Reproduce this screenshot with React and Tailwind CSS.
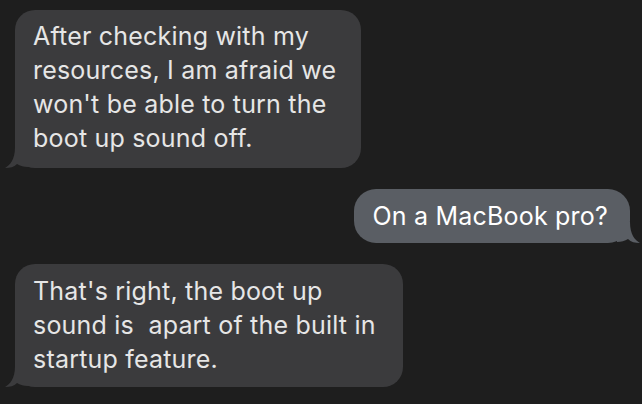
import React from "react";

function LeftTail() {
  return (
    <svg className="absolute left-[-11px] bottom-[-1px]" width="24" height="22" viewBox="0 0 24 22">
      <path d="M11 0 L24 0 L24 20 C20 20 16 19 13 17 C10 20 6 21 1 21 C6 18 11 13 11 0 Z" fill="#3b3b3d" />
    </svg>
  );
}

function RightTail({ color }) {
  return (
    <svg className="absolute right-[-11px] bottom-[-1px]" width="24" height="22" viewBox="0 0 24 22">
      <path d="M13 0 L0 0 L0 20 C4 20 8 19 11 17 C14 20 18 21 23 21 C18 18 13 13 13 0 Z" fill={color} />
    </svg>
  );
}

export default function App() {
  return (
    <div
      className="w-[642px] h-[404px] bg-[#1e1e1e] overflow-hidden flex flex-col gap-[21px] pt-[10px] pl-[15px] pr-[12px] text-[25px] leading-[34px] tracking-[0.2px]"
      style={{ fontFamily: "Inter, 'Noto Sans', sans-serif" }}
    >
      <div className="relative self-start w-[346px] h-[158px] rounded-[20px] bg-[#3b3b3d] px-[18px] pt-[9px] text-[#e6e6e6] whitespace-nowrap">
        After checking with my<br />
        resources, I am afraid we<br />
        won't be able to turn the<br />
        boot up sound off.
        <LeftTail />
      </div>

      <div className="relative self-end h-[54px] rounded-[22px] bg-[#5a5e64] pl-[19px] pr-[22px] pt-[10px] text-white whitespace-nowrap">
        On a MacBook pro?
        <RightTail color="#5a5e64" />
      </div>

      <div className="relative self-start w-[388px] h-[123px] rounded-[20px] bg-[#3b3b3d] px-[18px] pt-[10px] text-[#e6e6e6] whitespace-pre">
        That's right, the boot up<br />
        sound is  apart of the built in<br />
        startup feature.
        <LeftTail />
      </div>
    </div>
  );
}
